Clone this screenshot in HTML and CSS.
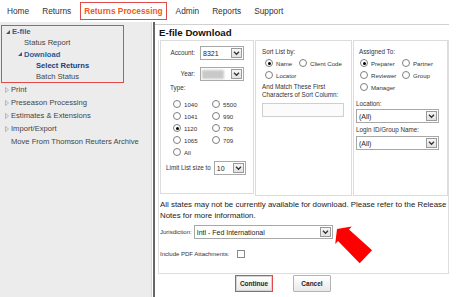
FILE: index.html
```html
<!DOCTYPE html>
<html>
<head>
<meta charset="utf-8">
<title>E-file Download</title>
<link rel="stylesheet" href="styles.css">
</head>
<body>
<!-- top menu -->
<div class="topnav">
    <a class="nav-item">Home</a>
    <a class="nav-item">Returns</a>
    <a class="nav-item nav-active">Returns Processing</a>
    <a class="nav-item">Admin</a>
    <a class="nav-item">Reports</a>
    <a class="nav-item">Support</a>
</div>
<div class="page">
    <!-- left tree -->
    <div class="sidebar">
        <div class="tree-focus">
            <div class="tree-row lvl0 link"><svg class="twisty" viewBox="0 0 6 6"><path d="M5 1L5 5L1 5Z" fill="#555"/></svg>E-file</div>
            <div class="tree-row lvl1">Status Report</div>
            <div class="tree-row lvl1b link"><svg class="twisty" viewBox="0 0 6 6"><path d="M5 1L5 5L1 5Z" fill="#555"/></svg>Download</div>
            <div class="tree-row lvl2 current">Select Returns</div>
            <div class="tree-row lvl2">Batch Status</div>
        </div>
        <div class="tree-more">
            <div class="tree-row lvl0"><svg class="twisty" viewBox="0 0 6 6"><path d="M1.5 0.5L4.5 3L1.5 5.5Z" fill="none" stroke="#aaa" stroke-width="0.8"/></svg>Print</div>
            <div class="tree-row lvl0"><svg class="twisty" viewBox="0 0 6 6"><path d="M1.5 0.5L4.5 3L1.5 5.5Z" fill="none" stroke="#aaa" stroke-width="0.8"/></svg>Preseason Processing</div>
            <div class="tree-row lvl0"><svg class="twisty" viewBox="0 0 6 6"><path d="M1.5 0.5L4.5 3L1.5 5.5Z" fill="none" stroke="#aaa" stroke-width="0.8"/></svg>Estimates &amp; Extensions</div>
            <div class="tree-row lvl0"><svg class="twisty" viewBox="0 0 6 6"><path d="M1.5 0.5L4.5 3L1.5 5.5Z" fill="none" stroke="#aaa" stroke-width="0.8"/></svg>Import/Export</div>
            <div class="tree-row lvl0 plain">Move From Thomson Reuters Archive</div>
        </div>
    </div>
    <div class="split"></div>

    <!-- main form -->
    <div class="content">
        <h1 class="title">E-file Download</h1>
        <div class="form-box">
            <div class="panels">
                <div class="panel panel-type">
                    <div class="field-row">
                        <span class="lbl lbl-right">Account:</span>
                        <div class="select sel-account"><span class="sel-val">8321</span><span class="sel-btn"><svg viewBox="0 0 9 8"><path d="M2 2.8L4.5 5.3L7 2.8" fill="none" stroke="#333" stroke-width="1.3"/></svg></span></div>
                    </div>
                    <div class="field-row year-row">
                        <span class="lbl lbl-right">Year:</span>
                        <div class="select sel-account"><span class="sel-blur"></span><span class="sel-btn"><svg viewBox="0 0 9 8"><path d="M2 2.8L4.5 5.3L7 2.8" fill="none" stroke="#333" stroke-width="1.3"/></svg></span></div>
                    </div>
                    <div class="lbl type-lbl">Type:</div>
                    <div class="radio-grid grid-type">
                        <span class="opt"><span class="radio"></span>1040</span>
                        <span class="opt"><span class="radio"></span>5500</span>
                        <span class="opt"><span class="radio"></span>1041</span>
                        <span class="opt"><span class="radio"></span>990</span>
                        <span class="opt"><span class="radio on"></span>1120</span>
                        <span class="opt"><span class="radio"></span>706</span>
                        <span class="opt"><span class="radio"></span>1065</span>
                        <span class="opt"><span class="radio"></span>709</span>
                        <span class="opt"><span class="radio"></span>All</span>
                    </div>
                    <div class="field-row limit-row">
                        <span class="lbl">Limit List size to</span>
                        <div class="select sel-limit"><span class="sel-val">10</span><span class="sel-btn"><svg viewBox="0 0 9 8"><path d="M2 2.8L4.5 5.3L7 2.8" fill="none" stroke="#333" stroke-width="1.3"/></svg></span></div>
                    </div>
                </div>

                <div class="panel panel-sort">
                    <div class="lbl">Sort List by:</div>
                    <div class="radio-grid grid-sort">
                        <span class="opt"><span class="radio on"></span>Name</span>
                        <span class="opt"><span class="radio"></span>Client Code</span>
                        <span class="opt"><span class="radio"></span>Locator</span>
                    </div>
                    <div class="lbl match-lbl">And Match These First<br>Characters of Sort Column:</div>
                    <div class="text-input"></div>
                </div>

                <div class="panel panel-assign">
                    <div class="lbl assign-lbl">Assigned To:</div>
                    <div class="radio-grid grid-assign">
                        <span class="opt"><span class="radio on"></span>Preparer</span>
                        <span class="opt"><span class="radio"></span>Partner</span>
                        <span class="opt"><span class="radio"></span>Reviewer</span>
                        <span class="opt"><span class="radio"></span>Group</span>
                        <span class="opt"><span class="radio"></span>Manager</span>
                    </div>
                    <div class="lbl loc-lbl">Location:</div>
                    <div class="select sel-wide"><span class="sel-val">(All)</span><span class="sel-btn"><svg viewBox="0 0 9 8"><path d="M2 2.8L4.5 5.3L7 2.8" fill="none" stroke="#333" stroke-width="1.3"/></svg></span></div>
                    <div class="lbl login-lbl">Login ID/Group Name:</div>
                    <div class="select sel-wide sel-login"><span class="sel-val">(All)</span><span class="sel-btn"><svg viewBox="0 0 9 8"><path d="M2 2.8L4.5 5.3L7 2.8" fill="none" stroke="#333" stroke-width="1.3"/></svg></span></div>
                </div>
            </div>

            <p class="note">All states may not be currently available for download. Please refer to the Release Notes for more information.</p>

            <div class="field-row juris-row">
                <span class="lbl small">Jurisdiction:</span>
                <div class="select sel-juris"><span class="sel-val">Intl - Fed International</span><span class="sel-btn"><svg viewBox="0 0 9 8"><path d="M2 2.8L4.5 5.3L7 2.8" fill="none" stroke="#333" stroke-width="1.3"/></svg></span></div>
            </div>
            <div class="field-row pdf-row">
                <span class="lbl small">Include PDF Attachments:</span>
                <span class="checkbox"></span>
            </div>
        </div>
        <div class="buttons">
            <span class="btn btn-continue">Continue</span>
            <span class="btn btn-cancel">Cancel</span>
        </div>
    </div>
</div>

<!-- red callout arrow -->
<svg class="callout" width="457" height="297" viewBox="0 0 457 297">
    <polygon points="337,229 351.8,226.5 349,229.4 372.1,250.2 359.7,263.2 338,241 335.2,243.9" fill="#ff0000"/>
</svg>
</body>
</html>
```

FILE: styles.css
```css
body,p,h1{margin: 0;}
body{
    width: 457px;
    height: 297px;
    overflow: hidden;
    position: relative;
    background: #fff;
    font-family: "Liberation Sans", Arial, sans-serif;
    color: #222;
}
.topnav{
    height: 22px;
    display: flex;
    align-items: center;
    padding-left: 3px;
    gap: 5px;
}
.nav-item{
    font-size: 8.3px;
    color: #333;
    padding: 0 4px;
    line-height: 16px;
}
.nav-active{
    color: #f05a22;
    font-weight: bold;
    border: 1.5px solid #e24a4a;
    padding: 0 3px;
    line-height: 16px;
}
.page{
    display: flex;
    height: 275px;
}
.sidebar{
    width: 153px;
    background: #ececec;
    border-right: 1px solid #d6d6d6;
    font-size: 7.6px;
    color: #444;
}
.split{
    width: 2px;
    margin-left: 1px;
    background: #666;
}
.tree-focus{
    margin: 3px 0 0 1px;
    width: 121px;
    border: 1.5px solid #e24a4a;
}
.tree-focus .tree-row{line-height: 11.3px;}
.tree-more .tree-row{line-height: 13px;}
.tree-row{
    display: flex;
    align-items: center;
    white-space: nowrap;
}
.twisty{
    width: 6px;
    height: 6px;
    margin-right: 1px;
}
.lvl0{padding-left: 4px;}
.tree-focus .lvl0{padding-left: 3px;}
.lvl1{padding-left: 22px;}
.lvl1b{padding-left: 15px;}
.lvl2{padding-left: 34px;}
.plain{padding-left: 11px;}
.link{
    color: #1f5f9e;
    font-weight: bold;
}
.current{
    color: #193f78;
    font-weight: bold;
}
.content{
    flex: 1;
    padding: 2px 8px 0 3px;
}
.title{
    font-size: 9.7px;
    font-weight: bold;
    color: #111;
    line-height: 15px;
    border-top: 1px solid #d0d0d0;
    margin-left: -3px;
    padding-left: 4px;
}
.form-box{
    border: 1px solid #dedede;
    border-top: none;
    height: 233px;
    padding-left: 1px;
}
.panels{
    display: flex;
    gap: 1px;
}
.panel{
    border: 1px solid #dcdcdc;
    height: 147px;
    display: flex;
    flex-direction: column;
    align-items: flex-start;
}
.panel-type{width: 92px; padding-top: 5px;}
.panel-sort{width: 89px; padding: 7px 0 0 6px;}
.panel-assign{width: 91px; padding: 7px 0 0 2px;}
.lbl{
    font-size: 6.3px;
    line-height: 8px;
    color: #333;
    white-space: nowrap;
}
.field-row{
    display: flex;
    align-items: center;
}
.lbl-right{
    width: 34px;
    text-align: right;
    margin-right: 5px;
}
.year-row{margin-top: 7px;}
.type-lbl{margin: 3px 0 0 9px;}
.select{
    position: relative;
    height: 14px;
    box-sizing: border-box;
    border: 1px solid #a8a8a8;
    background: #fff;
    display: flex;
    align-items: center;
}
.sel-val{
    font-size: 7px;
    color: #222;
    padding-left: 2px;
    white-space: nowrap;
}
.sel-blur{
    width: 22px;
    height: 9px;
    margin-left: 1px;
    background: #c9c9c9;
    filter: blur(1.2px);
}
.sel-btn{
    position: absolute;
    right: 1px;
    top: 1px;
    width: 11px;
    height: 10px;
    box-sizing: border-box;
    border: 1px solid #9a9a9a;
    background: linear-gradient(#f6f6f6, #e2e2e2);
    display: flex;
    align-items: center;
    justify-content: center;
}
.sel-btn svg{width: 9px; height: 8px;}
.sel-account{width: 44px;}
.sel-limit{width: 32px;}
.sel-wide{width: 83px;}
.sel-juris{width: 139px;}
.radio-grid{
    display: grid;
}
.opt{
    display: flex;
    align-items: center;
    height: 12px;
    font-size: 6.1px;
    color: #333;
    white-space: nowrap;
}
.radio{
    width: 8px;
    height: 8px;
    box-sizing: border-box;
    border: 1px solid #808080;
    border-radius: 50%;
    background: #fff;
    margin-right: 3px;
    position: relative;
}
.radio.on:after{
    content: '';
    position: absolute;
    left: 1.5px;
    top: 1.5px;
    width: 3px;
    height: 3px;
    border-radius: 50%;
    background: #000;
}
.grid-type{
    grid-template-columns: 39px auto;
    margin: 6px 0 0 12px;
}
.limit-row{margin: 3px 0 0 5px;}
.limit-row .lbl{margin-right: 3px;}
.grid-sort{
    grid-template-columns: 34px auto;
    margin: 1px 0 0 3px;
}
.match-lbl{margin-top: 2px;}
.text-input{
    margin-top: 4px;
    width: 82px;
    height: 14px;
    box-sizing: border-box;
    border: 1px solid #cfcfcf;
    background: #fbfbfb;
}
.assign-lbl{margin-left: 3px;}
.grid-assign{
    grid-template-columns: 42px auto;
    margin: 1px 0 0 4px;
}
.loc-lbl{margin-top: 7px;}
.loc-lbl + .select{margin-top: 1px;}
.login-lbl{margin-top: 3px;}
.sel-login{margin-top: 2px;}
.note{
    font-size: 7.9px;
    line-height: 11px;
    color: #222;
    margin-top: 3px;
}
.juris-row{margin-top: 4px;}
.small{
    font-size: 6px;
    margin-right: 2px;
}
.pdf-row{margin-top: 11px;}
.pdf-row .small{margin-right: 8px;}
.checkbox{
    width: 8px;
    height: 8px;
    box-sizing: border-box;
    border: 1px solid #8a8a8a;
    background: #fff;
}
.buttons{
    display: flex;
    gap: 20px;
    padding-left: 77px;
    margin-top: 1px;
}
.btn{
    width: 38px;
    height: 17px;
    box-sizing: border-box;
    display: flex;
    align-items: center;
    justify-content: center;
    font-size: 6.5px;
    font-weight: bold;
    color: #222;
    background: linear-gradient(#ffffff, #e9e9e9);
}
.btn-continue{
    border: 1.5px solid #e24a4a;
    box-shadow: inset 0 0 0 1px #d4d4d4;
}
.btn-cancel{
    border: 1px solid #b4b4b4;
    border-radius: 1px;
}
.callout{
    position: absolute;
    left: 0;
    top: 0;
    pointer-events: none;
}
```
